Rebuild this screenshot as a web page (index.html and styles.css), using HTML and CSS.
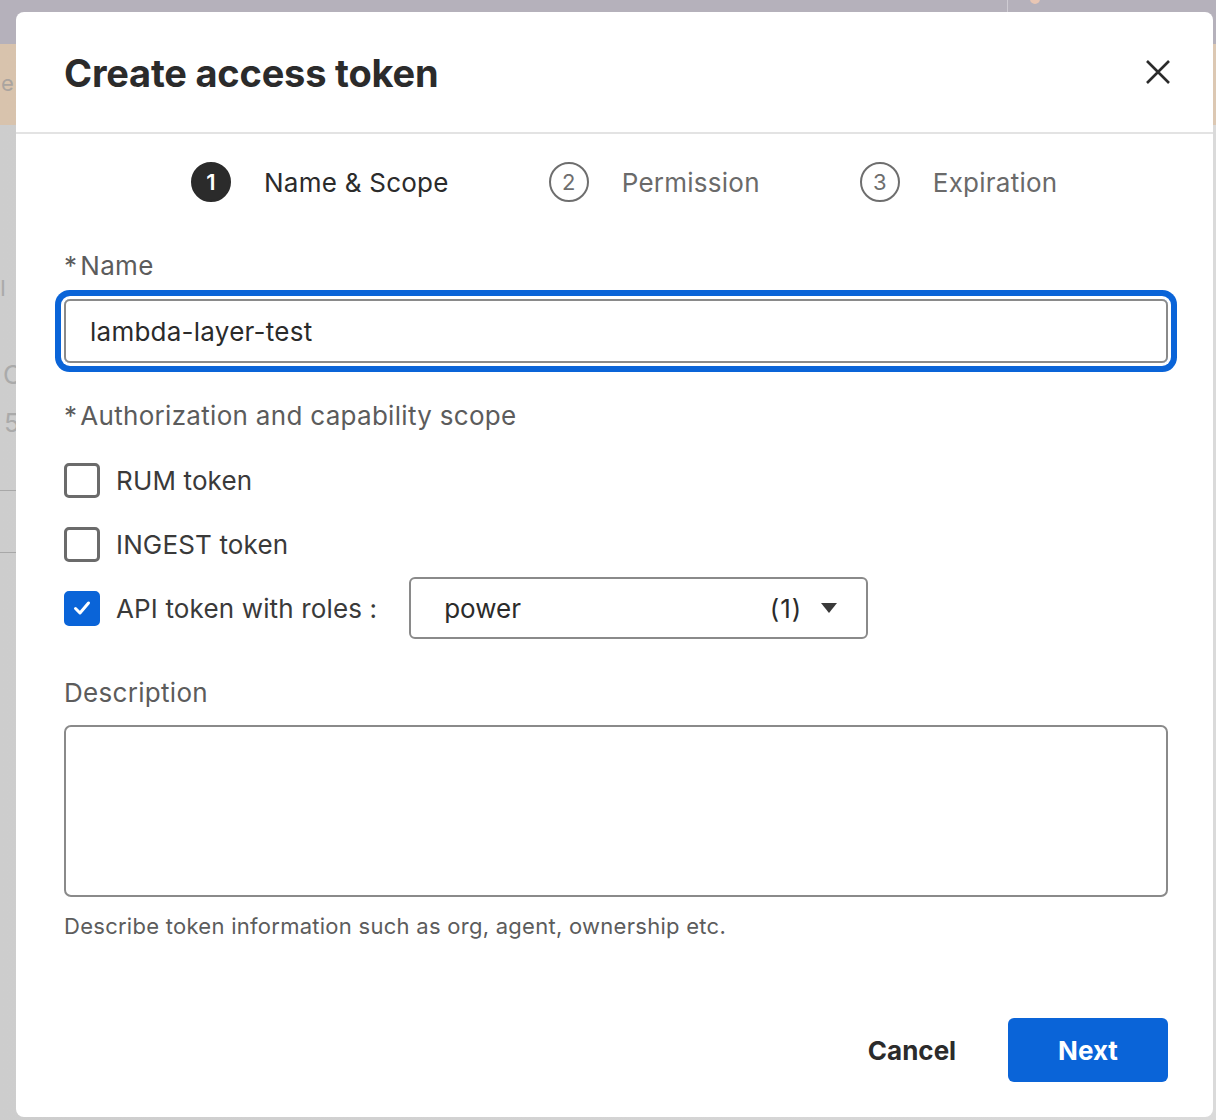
FILE: index.html
```html
<!DOCTYPE html>
<html lang="en">
<head>
<meta charset="utf-8">
<title>Create access token</title>
<link rel="stylesheet" href="styles.css">
</head>
<body>
<div class="page">
  <div class="page-top"><span class="page-divider"></span><span class="page-blob"></span></div>
  <div class="page-banner"><span class="ghost">e</span></div>
  <div class="page-body">
    <div class="ghost-row r1">I I</div>
    <div class="ghost-row r2">C</div>
    <div class="ghost-row r3">5</div>
    <div class="ghost-line l1"></div>
    <div class="ghost-line l2"></div>
  </div>
</div>

<div class="modal" role="dialog" aria-labelledby="dlg-title">
  <header class="modal-header">
    <h1 id="dlg-title" class="modal-title">Create access token</h1>
    <button class="close-btn" aria-label="Close">
      <svg width="26" height="26" viewBox="0 0 26 26"><path d="M2 2 L24 24 M24 2 L2 24" stroke="#2b2b2b" stroke-width="2.6" stroke-linecap="butt" fill="none"/></svg>
    </button>
  </header>

  <div class="modal-body">
    <ol class="steps">
      <li class="step active"><span class="step-num">1</span><span class="step-label">Name &amp; Scope</span></li>
      <li class="step"><span class="step-num">2</span><span class="step-label">Permission</span></li>
      <li class="step"><span class="step-num">3</span><span class="step-label">Expiration</span></li>
    </ol>

    <div class="field-label name-label"><span class="req">*</span>Name</div>
    <div class="text-input focused">lambda-layer-test</div>

    <div class="field-label scope-label"><span class="req">*</span>Authorization and capability scope</div>

    <div class="check-row row-rum">
      <span class="checkbox"></span><span class="check-label">RUM token</span>
    </div>
    <div class="check-row row-ingest">
      <span class="checkbox"></span><span class="check-label">INGEST token</span>
    </div>
    <div class="check-row row-api">
      <span class="checkbox checked">
        <svg width="22" height="22" viewBox="0 0 22 22"><path d="M4.5 11.5 L9 16 L17.5 6" stroke="#fff" stroke-width="3" fill="none" stroke-linecap="round" stroke-linejoin="round"/></svg>
      </span>
      <span class="check-label">API token with roles :</span>
      <div class="select">
        <span class="select-value">power</span>
        <span class="select-count">(1)</span>
        <span class="caret"></span>
      </div>
    </div>

    <div class="field-label desc-label">Description</div>
    <div class="textarea"></div>
    <div class="help-text">Describe token information such as org, agent, ownership etc.</div>
  </div>

  <footer class="modal-footer">
    <button class="btn btn-cancel">Cancel</button>
    <button class="btn btn-primary">Next</button>
  </footer>
</div>
</body>
</html>
```

FILE: styles.css
```css
* { box-sizing: border-box; }

html, body {
  margin: 0;
  padding: 0;
  height: 100%;
}

body {
  font-family: Inter, "Noto Sans", "Liberation Sans", sans-serif;
  background: #d2d2d4;
  overflow: hidden;
  position: relative;
}

/* ---------- dimmed page behind the dialog ---------- */
.page {
  height: 1120px;
  display: flex;
  flex-direction: column;
}
.page-top {
  height: 44px;
  background: #b5b1bb;
  position: relative;
}
.page-divider {
  position: absolute;
  left: 1007px;
  top: 0;
  width: 1px;
  height: 12px;
  background: #cfccd3;
}
.page-blob {
  position: absolute;
  left: 1030px;
  top: -6px;
  width: 10px;
  height: 10px;
  border-radius: 50%;
  background: #e8c6b4;
}
.page-banner {
  height: 81px;
  background: linear-gradient(90deg, #d8c3ad, #dcc8b3);
  padding: 26px 0 0 1px;
}
.ghost {
  font-size: 22px;
  color: #aaa49f;
}
.page-body {
  flex: 1;
  background: linear-gradient(90deg, #cdcdcd, #dadada);
  position: relative;
}
.ghost-row {
  position: absolute;
  left: 2px;
  font-size: 26px;
  color: #aaaaaa;
  line-height: 1;
}
.ghost-row.r1 { top: 152px; left: 0; font-size: 22px; letter-spacing: 2px; }
.ghost-row.r2 { top: 237px; left: 3px; }
.ghost-row.r3 { top: 285px; left: 4px; }
.ghost-line {
  position: absolute;
  left: 0;
  width: 16px;
  height: 1px;
  background: #a8a8a8;
}
.ghost-line.l1 { top: 365px; }
.ghost-line.l2 { top: 427px; }

/* ---------- dialog ---------- */
.modal {
  position: absolute;
  left: 16px;
  top: 12px;
  width: 1197px;
  height: 1105px;
  background: #ffffff;
  border-radius: 8px;
  display: flex;
  flex-direction: column;
  color: #2b2b2b;
}

.modal-header {
  height: 122px;
  border-bottom: 2px solid #e3e3e3;
  display: flex;
  align-items: center;
  justify-content: space-between;
  padding: 0 40px 0 48px;
}
.modal-title {
  margin: 0;
  font-size: 38px;
  font-weight: 700;
  letter-spacing: -0.2px;
  color: #2b2b2b;
  padding-top: 2px;
}
.close-btn {
  border: 0;
  background: transparent;
  padding: 2px;
  display: flex;
  cursor: pointer;
}

.modal-body {
  padding: 0 45px 0 48px;
}

/* steps */
.steps {
  list-style: none;
  margin: 28px 0 0 127px;
  padding: 0;
  display: flex;
  gap: 100px;
  height: 40px;
}
.step {
  display: flex;
  align-items: center;
  gap: 33px;
}
.step-num {
  width: 40px;
  height: 40px;
  border-radius: 50%;
  border: 2px solid #6e6e6e;
  color: #6e6e6e;
  display: flex;
  align-items: center;
  justify-content: center;
  font-size: 22px;
}
.step.active .step-num {
  background: #2b2b2b;
  border-color: #2b2b2b;
  color: #fff;
  font-weight: 600;
}
.step-label {
  font-size: 26px;
  letter-spacing: 0.25px;
  color: #6a6a6a;
}
.step.active .step-label {
  color: #2b2b2b;
}

/* fields */
.field-label {
  font-size: 26px;
  line-height: 32px;
  letter-spacing: 0.3px;
  color: #5c5c5c;
}
.req {
  margin-right: 3px;
}
.name-label { margin-top: 48px; }

.text-input {
  margin-top: 17px;
  height: 64px;
  border: 2px solid #8a8a8a;
  border-radius: 7px;
  padding: 0 24px;
  display: flex;
  align-items: center;
  font-size: 26px;
  letter-spacing: 0.25px;
  color: #2b2b2b;
}
.text-input.focused {
  box-shadow: 0 0 0 3px #ffffff, 0 0 0 9px #0a64d8;
  border-radius: 6px;
}

.scope-label { margin-top: 37px; }

.check-row {
  display: flex;
  align-items: center;
  height: 48px;
}
.row-rum { margin-top: 24px; }
.row-ingest { margin-top: 16px; }
.row-api { margin-top: 9px; height: 62px; }

.checkbox {
  width: 36px;
  height: 35px;
  border: 3px solid #6b6b6b;
  border-radius: 5px;
  flex: none;
  display: flex;
  align-items: center;
  justify-content: center;
}
.checkbox.checked {
  background: #0a64d8;
  border-color: #0a64d8;
}
.check-label {
  margin-left: 16px;
  font-size: 26px;
  letter-spacing: 0.15px;
  color: #3a3a3a;
}

.select {
  margin-left: 32px;
  width: 459px;
  height: 62px;
  border: 2px solid #8a8a8a;
  border-radius: 6px;
  display: flex;
  align-items: center;
  padding: 0 29px 0 33px;
  font-size: 26px;
  color: #2b2b2b;
}
.select-value { flex: 1; }
.select-count { margin-right: 19px; letter-spacing: 1px; }
.caret {
  width: 0;
  height: 0;
  border-left: 8px solid transparent;
  border-right: 8px solid transparent;
  border-top: 10px solid #3a3a3a;
}

.desc-label { margin-top: 38px; }

.textarea {
  margin-top: 16px;
  height: 172px;
  border: 2px solid #8a8a8a;
  border-radius: 7px;
}

.help-text {
  margin-top: 15px;
  font-size: 22px;
  line-height: 28px;
  letter-spacing: 0.27px;
  color: #5c5c5c;
}

/* footer */
.modal-footer {
  margin-top: auto;
  padding: 0 45px 35px 0;
  display: flex;
  justify-content: flex-end;
  gap: 16px;
}
.btn {
  width: 160px;
  height: 64px;
  border-radius: 6px;
  font-family: inherit;
  font-size: 26px;
  font-weight: 700;
  border: 0;
  cursor: pointer;
}
.btn-cancel {
  background: transparent;
  color: #2b2b2b;
}
.btn-primary {
  background: #0a64d8;
  color: #ffffff;
}
```
